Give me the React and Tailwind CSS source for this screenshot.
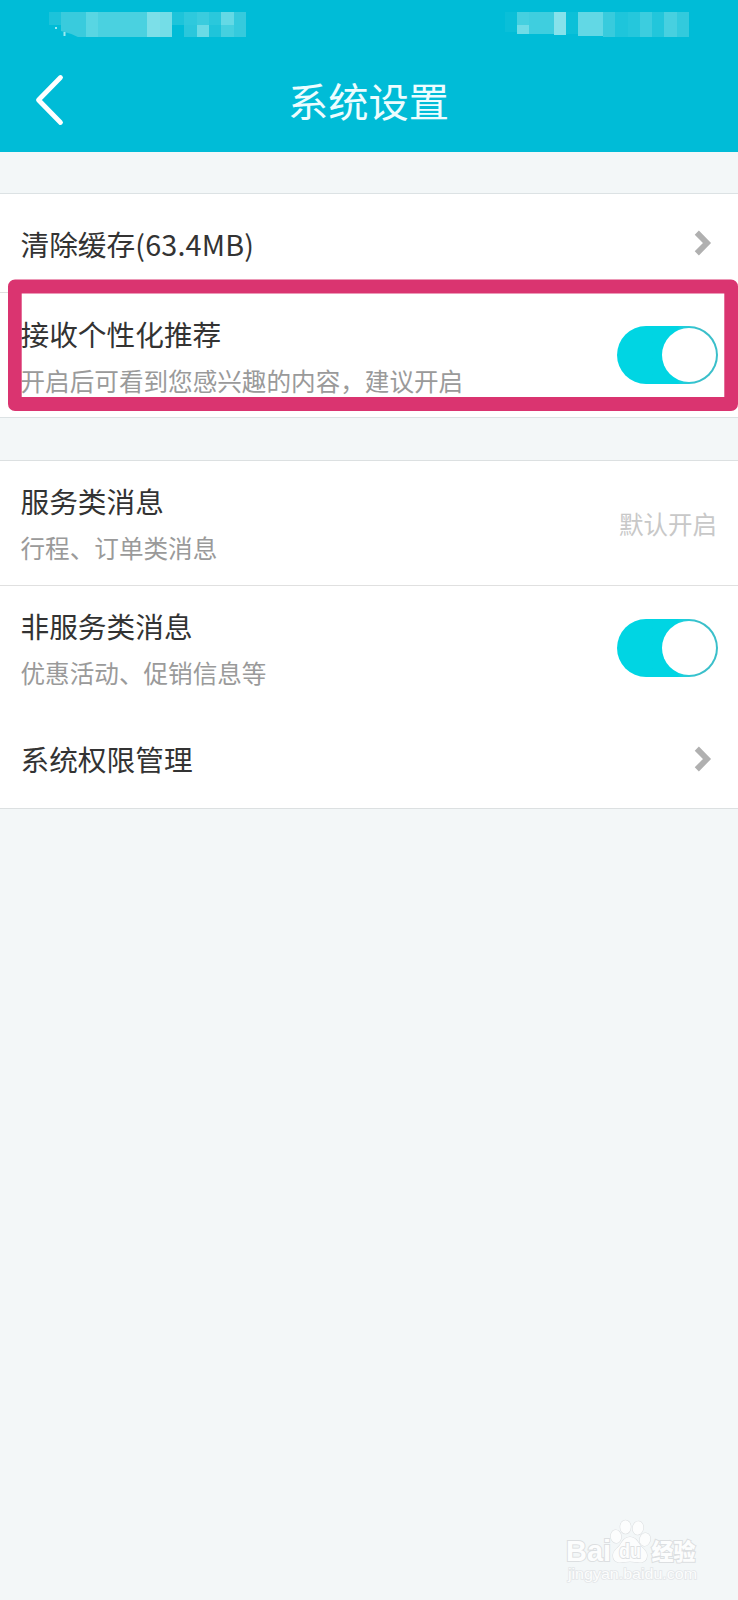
import React from "react";

// Pixelated status bar: [x, y, width, height, colour]
const STATUS_CELLS = [
  [49, 12, 12.5, 12.5, "#1cc3da"],
  [61, 12, 25, 25, "#39cbdd"],
  [86, 12, 12.5, 25, "#58d6e3"],
  [98, 12, 49, 25, "#4ad1e0"],
  [147, 12, 13, 25, "#7cdfe8"],
  [160, 12, 12, 25, "#74dde7"],
  [172, 12, 12.5, 12.5, "#1dc4da"],
  [184, 12, 12.5, 12.5, "#2ec9dd"],
  [184, 24.5, 12.5, 12.5, "#2ac7dc"],
  [196.5, 12, 12.5, 12.5, "#3accde"],
  [196.5, 24.5, 12.5, 12.5, "#6adbe6"],
  [209, 12, 12.5, 12.5, "#2ac8dc"],
  [209, 24.5, 12.5, 12.5, "#1fc4da"],
  [221, 12, 12.5, 12.5, "#64d9e5"],
  [221, 24.5, 12.5, 12.5, "#45d0df"],
  [233.5, 12, 12.5, 25, "#35cadd"],
  [505, 12, 12, 20, "#0abfd8"],
  [517, 12, 12, 12.5, "#45d0e0"],
  [517, 24.5, 12, 9.5, "#70dce7"],
  [529, 12, 24.5, 22, "#3fcedf"],
  [553.5, 12, 12.5, 22.5, "#86e2eb"],
  [566, 12, 12, 22, "#0cc0d8"],
  [578, 12, 25, 24, "#62d8e5"],
  [603, 12, 12, 25, "#38cbdd"],
  [615, 12, 13, 25, "#1ec5db"],
  [628, 12, 12, 25, "#25c7dc"],
  [640, 12, 12, 25, "#3ccddf"],
  [652, 12, 12, 25, "#22c6db"],
  [664, 12, 13, 25, "#47d0e0"],
  [677, 12, 12, 25, "#32cadd"],
];

function StatusBar() {
  return (
    <svg className="block h-[50px] w-full" viewBox="0 0 738 50" aria-hidden="true">
      {STATUS_CELLS.map(([x, y, w, h, fill], i) => (
        <rect key={i} x={x} y={y} width={w} height={h} fill={fill} shapeRendering="crispEdges" />
      ))}
      <path d="M61 31 Q70 33 79 37.500 H61Z" fill="#00bcd7" />
      <path d="M64.500 32v4M56 27v2" stroke="#9ceaf0" strokeWidth="2" />
    </svg>
  );
}

function Chevron() {
  return (
    <svg className="mr-[6px] block h-[26px] w-[18px]" viewBox="0 0 18 26" fill="none" aria-hidden="true">
      <path d="M2.800 2.600 L13 13 L2.800 23.400" stroke="#b0b0b0" strokeWidth="5.800" />
    </svg>
  );
}

function Toggle() {
  return (
    <div className="flex h-[58px] w-[101px] items-center justify-end rounded-full bg-linear-to-r from-[#00d5e3] from-60% to-[#3abfca] to-80% pr-[2px]">
      <div className="size-[54px] rounded-full bg-white" />
    </div>
  );
}

function SimpleRow({ title, suffix, titleClass }) {
  return (
    <div className="flex h-[98px] items-center justify-between pr-5 pl-[20.5px]">
      <span className={`text-[28.7px] leading-9 text-[#333333] ${titleClass ?? ""}`}>
        {title}
        {suffix && <span className="tracking-[0.2px]">{suffix}</span>}
      </span>
      <Chevron />
    </div>
  );
}

function DetailRow({ title, detail, bodyClass = "pt-[22px]", children }) {
  return (
    <div className="flex h-[124px] items-center justify-between pr-5 pl-[20.5px]">
      <div className={`flex h-full flex-col gap-[13px] ${bodyClass}`}>
        <span className="text-[28.7px] leading-9 text-[#333333]">{title}</span>
        <span className="text-[24.6px] leading-[30px] text-[#9a9a9a]">{detail}</span>
      </div>
      {children}
    </div>
  );
}

function Watermark() {
  return (
    <svg className="block h-[70px] w-[140px]" viewBox="0 0 140 70" fontFamily="'Liberation Sans', 'Noto Sans CJK SC', sans-serif" aria-hidden="true">
      <g fill="#fcfdfd" stroke="#dcdfe1" strokeWidth="1.100" paintOrder="stroke">
        <text x="0" y="42" fontSize="30" fontWeight="700" textLength="45" lengthAdjust="spacingAndGlyphs" strokeWidth="2">Bai</text>
        <text x="85.500" y="40.500" fontSize="23" fontWeight="900" textLength="44" lengthAdjust="spacingAndGlyphs" strokeWidth="2">经验</text>
        <path d="M64 18c-5 0-7.500 4-10 8-2.500 3.500-7 5.500-7 10.500 0 4.500 3 7 7.500 7 3.500 0 6-1 9.500-1s6 1 9.500 1c4.500 0 7.500-2.500 7.500-7 0-5-4.500-7-7-10.500-2.500-4-5-8-10-8Z" />
        <ellipse cx="50" cy="17.500" rx="5.300" ry="6.500" transform="rotate(-8 50 17.500)" />
        <ellipse cx="59.500" cy="8" rx="5.300" ry="6.800" />
        <ellipse cx="72" cy="9" rx="5.300" ry="6.800" transform="rotate(8 72 9)" />
        <ellipse cx="79" cy="20.500" rx="5.300" ry="6.500" transform="rotate(15 79 20.500)" />
        <text x="53" y="39" fontSize="20" fontWeight="700" textLength="22" lengthAdjust="spacingAndGlyphs" strokeWidth="1.800">du</text>
      </g>
      <text x="2" y="60" fontSize="15" textLength="129" lengthAdjust="spacingAndGlyphs" fill="#fcfdfd" stroke="#e3e6e8" strokeWidth="1.500" paintOrder="stroke">jingyan.baidu.com</text>
    </svg>
  );
}

export default function App() {
  return (
    <div className="relative flex h-[1600px] w-[738px] flex-col overflow-hidden bg-[#f3f7f8] font-['Noto_Sans_CJK_SC',sans-serif]">
      <header className="h-[152px] shrink-0 bg-[#00bcd7]">
        <StatusBar />
        <div className="grid h-[100px] grid-cols-[120px_1fr_120px] items-center">
          <svg className="block size-full" viewBox="0 0 120 100" fill="none" aria-label="返回">
            <path d="M60.500 27.500 L38.500 50 L60.500 72.500" stroke="white" strokeWidth="4.800" strokeLinecap="round" strokeLinejoin="round" />
          </svg>
          <h1 className="pr-px text-center text-[40.3px] leading-[50px] text-[#edfdff]">系统设置</h1>
        </div>
      </header>

      <main className="flex flex-col gap-[42px] pt-[41px]">
        <section className="relative border-y border-[#dce2e4] bg-white">
          <SimpleRow title="清除缓存" suffix="(63.4MB)" titleClass="pt-px" />
          <div className="h-px bg-[#e0e0e0]" />
          <DetailRow title="接收个性化推荐" detail="开启后可看到您感兴趣的内容，建议开启" bodyClass="pt-[22.5px]">
            <Toggle />
          </DetailRow>
          <div className="absolute top-[85px] left-2 h-[132px] w-[730px]">
            <svg className="block size-full" viewBox="0 0 730 132" aria-hidden="true">
              <path fillRule="evenodd" fill="#da3470" d="M7 .5H723a7 7 0 0 1 7 7V125a7 7 0 0 1-7 7H7a7 7 0 0 1-7-7V7.500a7 7 0 0 1 7-7ZM13.700 14.500V118H716.300V14.500Z" />
            </svg>
          </div>
        </section>

        <section className="border-y border-[#dce0e1] bg-white">
          <DetailRow title="服务类消息" detail="行程、订单类消息">
            <span className="pt-px pr-px text-[24.5px] leading-[30px] text-[#c8c8c8]">默认开启</span>
          </DetailRow>
          <div className="h-px bg-[#e0e0e0]" />
          <DetailRow title="非服务类消息" detail="优惠活动、促销信息等">
            <Toggle />
          </DetailRow>
          <SimpleRow title="系统权限管理" />
        </section>
      </main>

      <footer className="mt-auto flex justify-end pr-[32px] pb-[11px]">
        <Watermark />
      </footer>
    </div>
  );
}
